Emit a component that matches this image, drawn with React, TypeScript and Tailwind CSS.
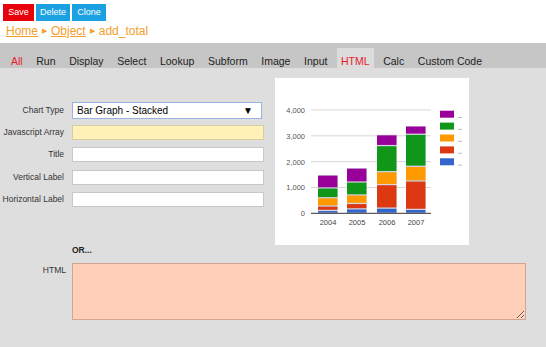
import React from 'react';

const tabs = ['All', 'Run', 'Display', 'Select', 'Lookup', 'Subform', 'Image', 'Input', 'HTML', 'Calc', 'Custom Code'];

// stacked values per year: blue, red, orange, green, purple
const years = [
  { year: '2004', x: 43, vals: [110, 170, 320, 380, 500] },
  { year: '2005', x: 72, vals: [170, 210, 330, 500, 540] },
  { year: '2006', x: 102, vals: [200, 910, 500, 1010, 420] },
  { year: '2007', x: 131, vals: [150, 1100, 570, 1240, 320] },
];
const colors = ['#3366cc', '#dc3912', '#ff9900', '#109618', '#990099'];
const base = 135.3;
const scale = 0.02583;

function Chart() {
  return (
    <svg width="194" height="167" viewBox="0 0 194 167">
      {[1, 2, 3, 4].map((k) => (
        <line key={k} x1="36" x2="156" y1={base - k * 1000 * scale} y2={base - k * 1000 * scale} stroke="#d6d6d6" strokeWidth="1" />
      ))}
      {[0, 1, 2, 3, 4].map((k) => (
        <text key={k} x="30" y={base - k * 1000 * scale + 3} textAnchor="end" fontSize="7.5" fill="#555" fontFamily="'Liberation Sans', Arial, sans-serif">
          {k === 0 ? '0' : `${k},000`}
        </text>
      ))}
      {years.map((y) => {
        let cum = 0;
        return (
          <g key={y.year}>
            {y.vals.map((v, i) => {
              const y0 = base - cum * scale;
              cum += v;
              const y1 = base - cum * scale;
              return (
                <g key={i}>
                  <rect x={y.x} y={y1} width="19.5" height={y0 - y1} fill="#c9c9d6" />
                  <rect x={y.x} y={y1 + 0.6} width="19.5" height={Math.max(0, y0 - y1 - 1.3)} fill={colors[i]} />
                </g>
              );
            })}
            <text x={y.x + 10} y="147" textAnchor="middle" fontSize="7.5" fill="#444" fontFamily="'Liberation Sans', Arial, sans-serif">
              {y.year}
            </text>
          </g>
        );
      })}
      <line x1="36" x2="156" y1={base} y2={base} stroke="#333" strokeWidth="1" />
      {[4, 3, 2, 1, 0].map((c, i) => (
        <g key={c}>
          <rect x="165" y={32.7 + i * 11.9} width="14" height="7" fill={colors[c]} />
          <line x1="183" x2="187" y1={39.5 + i * 11.9} y2={39.5 + i * 11.9} stroke="#aaa" strokeWidth="0.8" />
        </g>
      ))}
    </svg>
  );
}

function Field({ label, children }: { label: string; children: React.ReactNode }) {
  return (
    <div className="flex items-center">
      <div className="w-[66px] pr-[2px] text-right text-[8.5px] text-[#333]">{label}</div>
      <div className="ml-[6px] flex-1">{children}</div>
    </div>
  );
}

export default function App() {
  return (
    <div className="h-[347px] w-[546px] overflow-hidden bg-[#dedede] font-['Liberation_Sans',Arial,sans-serif]">
      <div className="bg-white px-[3px] pt-[4px] pb-[4px]">
        <div className="flex gap-[2px]">
          <button className="h-[17px] w-[31px] bg-[#e8000b] text-[9px] text-white">Save</button>
          <button className="h-[17px] w-[34px] bg-[#1ba1e2] text-[9px] text-white">Delete</button>
          <button className="h-[17px] w-[34px] bg-[#1ba1e2] text-[9px] text-white">Clone</button>
        </div>
        <div className="mt-[2px] flex h-[16px] items-center pl-[3px] text-[12px] leading-[16px] text-[#f2a02a]">
          <span className="underline">Home</span>
          <span className="mx-[4px] text-[7px]">▶</span>
          <span className="underline">Object</span>
          <span className="mx-[4px] text-[7px]">▶</span>
          <span>add_total</span>
        </div>
      </div>
      <div className="flex h-[25px] items-end gap-[5.6px] bg-[#c6c6c6] pl-[7px]">
        {tabs.map((t) => (
          <div
            key={t}
            className={`h-[20px] px-[4px] pt-[6px] text-[10.5px] leading-[14px] ${
              t === 'HTML' ? 'bg-[#dcdcdc] text-[#e8202a]' : t === 'All' ? 'text-[#e8202a]' : 'text-[#222]'
            }`}
          >
            {t}
          </div>
        ))}
      </div>
      <div className="pt-[10px]">
        <div className="flex">
          <div className="w-[264px] pt-[24px]">
            <Field label="Chart Type">
              <div className="flex h-[17px] w-[190px] items-center justify-between border border-[#9bb3e0] bg-white pl-[4px] pr-[8px] text-[10px] text-black">
                <span>Bar Graph - Stacked</span>
                <span className="text-[10px]">▼</span>
              </div>
            </Field>
            <div className="mt-[6px]">
              <Field label="Javascript Array">
                <div className="h-[15px] border border-[#d8cf9e] bg-[#fff1b8]" />
              </Field>
            </div>
            <div className="mt-[7px]">
              <Field label="Title">
                <div className="h-[15px] border border-[#c8c8c8] bg-white" />
              </Field>
            </div>
            <div className="mt-[8px]">
              <Field label="Vertical Label">
                <div className="h-[15px] border border-[#c8c8c8] bg-white" />
              </Field>
            </div>
            <div className="mt-[7px]">
              <Field label="Horizontal Label">
                <div className="h-[15px] border border-[#c8c8c8] bg-white" />
              </Field>
            </div>
          </div>
          <div className="ml-[11px] h-[167px] w-[194px] bg-white">
            <Chart />
          </div>
        </div>
        <div className="pl-[72px] text-[8.5px] font-bold leading-[10px] text-[#222]">OR...</div>
        <div className="mt-[8px] flex">
          <div className="w-[66px] pt-[1px] text-right text-[8.5px] text-[#333]">HTML</div>
          <textarea className="ml-[6px] h-[57px] w-[454px] border border-[#d4a594] bg-[#ffcfb9] outline-none" />
        </div>
      </div>
    </div>
  );
}
